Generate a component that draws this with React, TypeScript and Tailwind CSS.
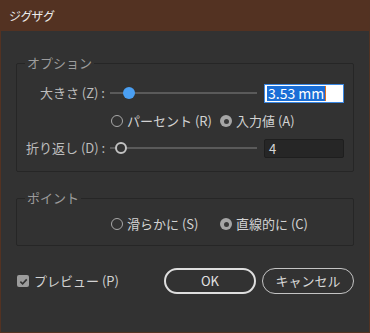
import React from 'react';

const font = { fontFamily: '"Noto Sans CJK JP", "Noto Sans", sans-serif' };

function Radio({ checked, label }: { checked?: boolean; label: string }) {
  return (
    <div className="flex items-center gap-[4px]">
      {checked ? (
        <span className="w-[12px] h-[12px] rounded-full bg-[#a6a6a6] flex items-center justify-center">
          <span className="w-[5px] h-[5px] rounded-full bg-[#3a3a3a]" />
        </span>
      ) : (
        <span className="w-[12px] h-[12px] rounded-full border-[1.5px] border-[#a8a8a8]" />
      )}
      <span className="text-[13px] leading-[20px] text-[#d2d2d2]">{label}</span>
    </div>
  );
}

function Group({ title, className, children }: { title: string; className?: string; children: React.ReactNode }) {
  return (
    <div className={'relative mx-[15px] border border-[#262626] rounded-[2px] ' + (className ?? '')}>
      <span className="absolute -top-[10px] left-[8px] px-[2px] bg-[#323232] text-[13px] leading-[18px] text-[#9c9c9c]">
        {title}
      </span>
      {children}
    </div>
  );
}

function Slider({ pos, active }: { pos: number; active?: boolean }) {
  return (
    <div className="relative ml-[5px] w-[147px] h-[20px] flex items-center">
      <div className="w-full h-[2px] bg-[#5a5a5a]" />
      {active ? (
        <span
          className="absolute w-[12px] h-[12px] rounded-full bg-[#4a9ff2]"
          style={{ left: pos - 6 }}
        />
      ) : (
        <span
          className="absolute w-[12px] h-[12px] rounded-full border-2 border-[#c2c2c2] bg-[#323232]"
          style={{ left: pos - 6 }}
        />
      )}
    </div>
  );
}

export default function App() {
  return (
    <div className="w-[370px] h-[333px] bg-[#533222] flex flex-col select-none" style={font}>
      {/* Title bar */}
      <div className="h-[31px] flex items-center pl-[9px] text-[12px] text-[#ececec] [font-feature-settings:'palt']">
        ジグザグ
      </div>

      <div className="flex-1 mx-px mb-px bg-[#323232] flex flex-col">
        {/* Options */}
        <Group title="オプション" className="mt-[32px] pt-[19px] pb-[13px]">
          <div className="flex items-center h-[20px]">
            <span className="pl-[9px] w-[88px] text-right text-[13px] leading-[20px] text-[#bdbdbd]">大きさ (Z) :</span>
            <Slider pos={19} active />
            <div className="ml-[7px] w-[80px] h-[19px] bg-white border border-[#3a87e2] flex items-center pl-[2px]">
              <span className="bg-[#1a6ed6] text-white text-[14px] leading-[15px] px-px">3.53 mm</span>
              <span className="w-px h-[15px] bg-[#e07020]" />
            </div>
          </div>

          <div className="flex items-center h-[20px] mt-[8px] pl-[94px]">
            <div className="w-[109px]">
              <Radio label="パーセント (R)" />
            </div>
            <Radio checked label="入力値 (A)" />
          </div>

          <div className="flex items-center h-[20px] mt-[7px]">
            <span className="pl-[9px] w-[88px] text-right text-[13px] leading-[20px] text-[#bdbdbd] whitespace-nowrap">折り返し (D) :</span>
            <Slider pos={11} />
            <div className="ml-[7px] w-[80px] h-[19px] bg-[#262626] border border-[#1e1e1e] rounded-[2px] flex items-center pl-[4px]">
              <span className="text-[13px] leading-[15px] text-[#d6d6d6]">4</span>
            </div>
          </div>
        </Group>

        {/* Points */}
        <Group title="ポイント" className="mt-[26px] pt-[15px] pb-[11px]">
          <div className="flex items-center h-[20px] pl-[94px]">
            <div className="w-[109px]">
              <Radio label="滑らかに (S)" />
            </div>
            <Radio checked label="直線的に (C)" />
          </div>
        </Group>

        {/* Footer */}
        <div className="flex items-center mt-[22px] pl-[16px] pr-[15px]">
          <div className="flex items-center gap-[5px]">
            <span className="w-[12px] h-[12px] rounded-[2px] bg-[#9c9c9c] flex items-center justify-center">
              <svg width="9" height="9" viewBox="0 0 10 10">
                <path d="M1.5 5.2 L4 7.6 L8.6 2.6" fill="none" stroke="#333" strokeWidth="1.8" />
              </svg>
            </span>
            <span className="text-[13px] leading-[20px] text-[#d2d2d2]">プレビュー (P)</span>
          </div>
          <div className="ml-auto flex items-center gap-[6px]">
            <button className="w-[92px] h-[26px] rounded-full border-2 border-[#dedede] text-[13px] text-[#e2e2e2] flex items-center justify-center">
              OK
            </button>
            <button className="w-[92px] h-[26px] rounded-full border-[1.5px] border-[#c4c4c4] text-[13px] text-[#d8d8d8] flex items-center justify-center">
              キャンセル
            </button>
          </div>
        </div>
      </div>
    </div>
  );
}
